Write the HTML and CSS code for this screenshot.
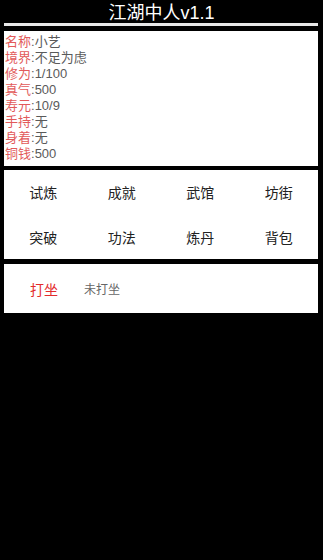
FILE: index.html
```html
<!DOCTYPE html>
<html lang="zh">
<head>
<meta charset="utf-8">
<link rel="stylesheet" href="styles.css">
</head>
<body>
<div class="title">江湖中人v1.1</div>
<div class="rule"></div>
<div class="card info">
  <div class="row"><span class="k">名称</span>:小艺</div>
  <div class="row"><span class="k">境界</span>:不足为虑</div>
  <div class="row"><span class="k">修为</span>:1/100</div>
  <div class="row"><span class="k">真气</span>:500</div>
  <div class="row"><span class="k">寿元</span>:10/9</div>
  <div class="row"><span class="k">手持</span>:无</div>
  <div class="row"><span class="k">身着</span>:无</div>
  <div class="row"><span class="k">铜钱</span>:500</div>
</div>
<div class="card menu">
  <div class="cell">试炼</div>
  <div class="cell">成就</div>
  <div class="cell">武馆</div>
  <div class="cell">坊街</div>
  <div class="cell">突破</div>
  <div class="cell">功法</div>
  <div class="cell">炼丹</div>
  <div class="cell">背包</div>
</div>
<div class="card medit">
  <div class="mbtn">打坐</div>
  <div class="mstate">未打坐</div>
</div>
</body>
</html>
```

FILE: styles.css
```css
html, body {
  margin: 0;
  padding: 0;
  background: #000;
  font-family: "Liberation Sans", "Noto Sans CJK SC", sans-serif;
}
.title {
  height: 23px;
  line-height: 26px;
  text-align: center;
  color: #fff;
  font-size: 18px;
}
.rule {
  height: 3px;
  margin: 0 5px 0 4px;
  background: #e8e8e8;
}
.card {
  background: #fff;
  margin: 0 5px 0 4px;
}
.info {
  margin-top: 5px;
  height: 135px;
  box-sizing: border-box;
  padding: 3px 0 0 1px;
  font-size: 13px;
  color: #5a5a5a;
}
.row {
  height: 16px;
  line-height: 16px;
}
.k {
  color: #e25a5a;
}
.menu {
  margin-top: 4px;
  height: 89px;
  display: grid;
  grid-template-columns: repeat(4, 1fr);
  grid-template-rows: repeat(2, 1fr);
}
.cell {
  display: flex;
  align-items: center;
  justify-content: center;
  font-size: 14px;
  color: #222;
}
.medit {
  margin-top: 5px;
  height: 49px;
  display: flex;
  align-items: center;
}
.mbtn {
  width: 80px;
  text-align: center;
  font-size: 14px;
  color: #e32b2b;
}
.mstate {
  font-size: 12px;
  color: #666;
}
```
